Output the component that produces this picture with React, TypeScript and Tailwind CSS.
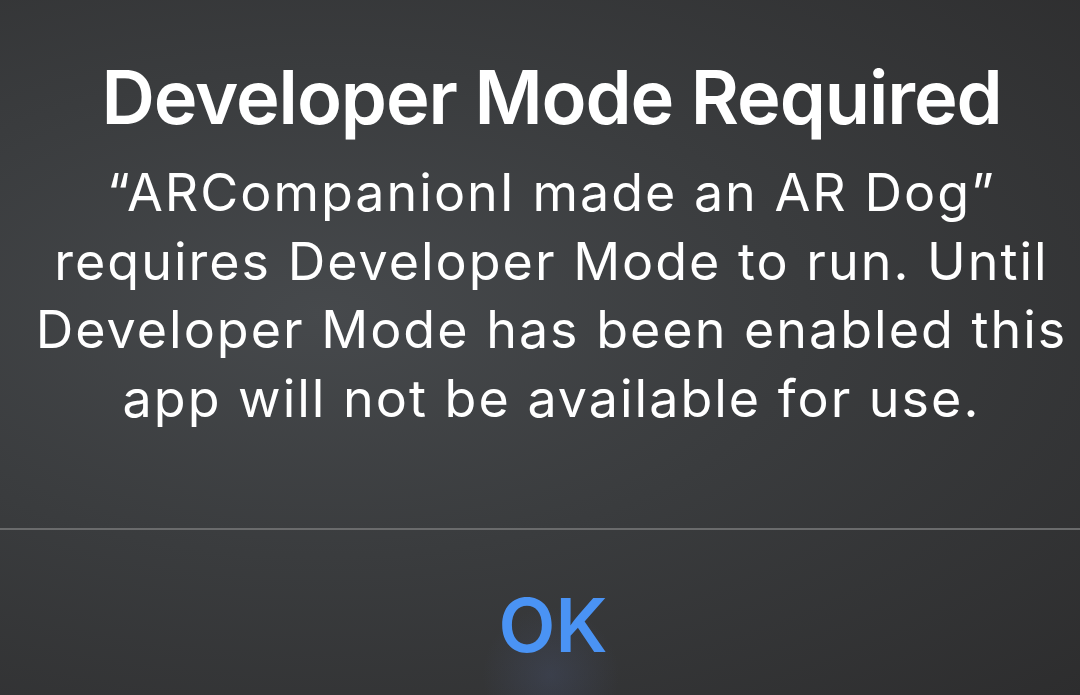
import React from 'react';

function App() {
  return (
    <div
      className="w-[1080px] h-[695px] overflow-hidden flex flex-col text-white bg-[radial-gradient(ellipse_at_30%_45%,#46494c_0%,#3a3c3e_45%,#2d2d2e_100%)]"
      style={{ fontFamily: 'Inter, "Noto Sans", sans-serif' }}
    >
      {/* Alert content */}
      <div className="h-[528px] flex flex-col items-center pt-[58px] pl-[23px]">
        <h1 className="text-[74px] leading-[78px] font-semibold tracking-[-1.1px] whitespace-nowrap">Developer Mode Required</h1>
        <p className="mt-[23px] text-[52px] leading-[68.5px] text-center tracking-[2px] whitespace-nowrap">
          “ARCompanionI made an AR Dog”
          <br />
          requires Developer Mode to run. Until
          <br />
          Developer Mode has been enabled this
          <br />
          app will not be available for use.
        </p>
      </div>

      <div className="h-[2px] bg-[#6a6b6c]" />

      {/* Action */}
      <button className="flex-1 flex items-center justify-center pt-[26px] pl-[26px] text-[74px] font-semibold text-[#4a93f4] bg-[radial-gradient(circle_at_51%_88%,rgba(90,110,170,0.18)_0%,rgba(90,110,170,0)_12%)]">
        OK
      </button>
    </div>
  );
}

export default App;
